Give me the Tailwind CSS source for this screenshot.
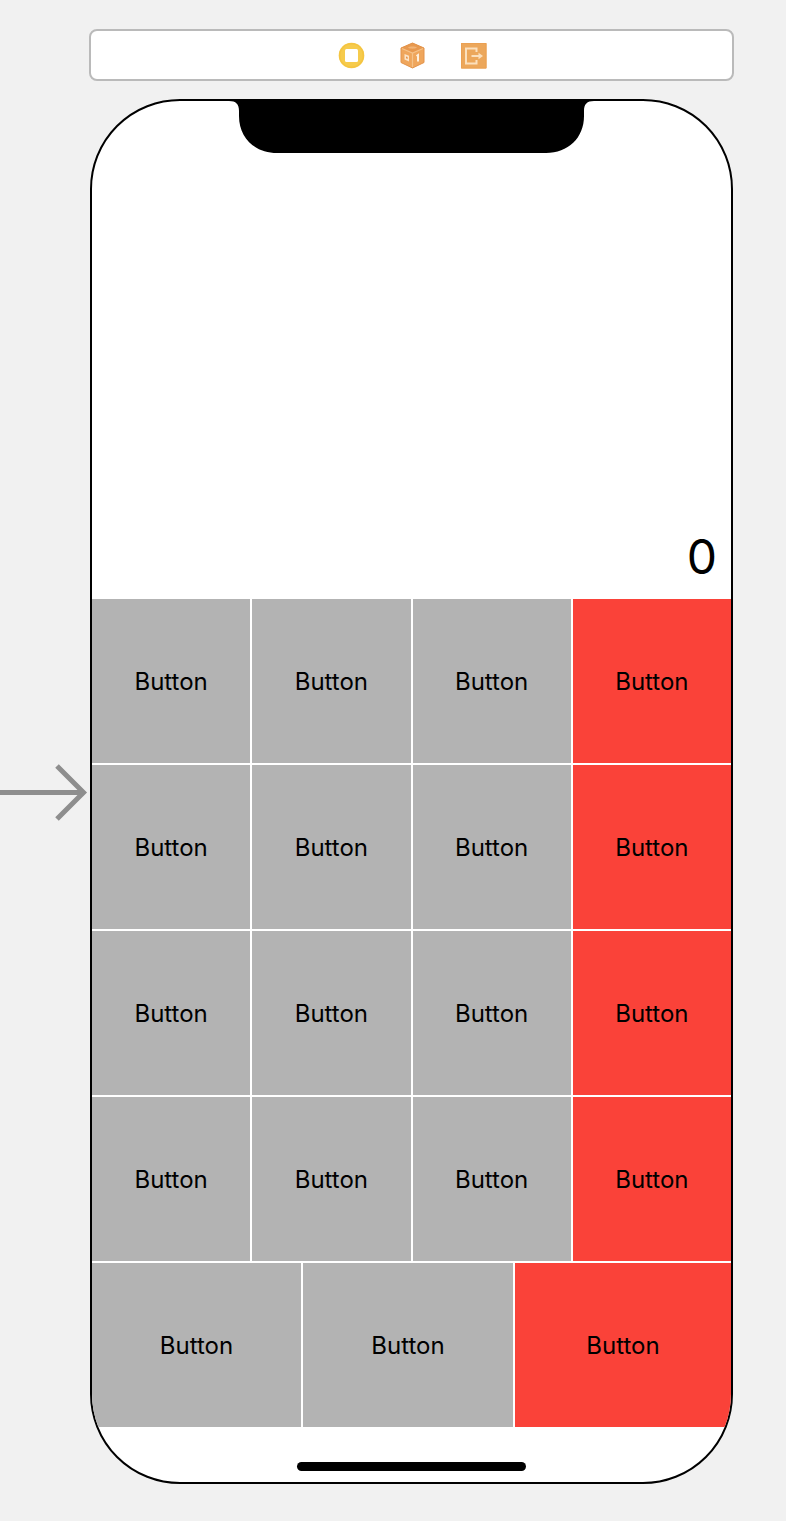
<!DOCTYPE html>
<html lang="en">
<head>
<meta charset="utf-8">
<meta name="viewport" content="width=device-width, initial-scale=1">
<title>Calculator storyboard</title>
<script src="https://cdn.jsdelivr.net/npm/@tailwindcss/browser@4"></script>
</head>
<body class="min-h-screen bg-[#f1f1f1] font-['Inter','Liberation_Sans',sans-serif] text-black">
<main class="pt-[29px] pb-9">
  <!-- Scene dock -->
  <header class="mr-[52px] ml-[89px] flex h-[52px] items-center justify-center gap-[34px] rounded-lg border-2 border-[#bababa] bg-white pl-[2px]">
    <button type="button" aria-label="View controller">
      <svg class="block size-[27px]" viewBox="0 0 27 27"><circle cx="13.500" cy="13.500" r="12.800" fill="#f6cb4c"/><circle cx="13.500" cy="13.500" r="11.800" fill="none" stroke="#f4c441" stroke-width="1.500"/><rect x="7" y="7" width="13" height="13" rx="1.500" fill="#fff"/></svg>
    </button>
    <button type="button" aria-label="First responder">
      <svg class="block size-[27px]" viewBox="0 0 27 27"><path d="M13.500 1 25 6v14.500L13.500 26 2 20.500V6z" fill="#efa65c"/><path d="M13.500 1 25 6l-11.500 5L2 6z" fill="#e8994f"/><path d="M3 6.500 13.500 11 24 6.500M13.500 11v14" fill="none" stroke="#f5c288" stroke-width="1.200"/><path d="M13.500 1 25 6v14.500L13.500 26 2 20.500V6z" fill="none" stroke="#e3934a" stroke-width="1"/><path d="M9 5.500c1.500-1.300 7-1.500 9 0-2 1.600-7 1.600-9 0z" fill="#f1b578"/><path d="m5.500 12 4.500 1.700v5.800L5.500 17.500z" fill="#fbe3c6"/><path d="m7 14.500 1.600.6v1.800L7 16.200z" fill="#e5924a"/><path d="m17.500 14 1.500-1v6.500" fill="none" stroke="#fff0dc" stroke-width="2"/></svg>
    </button>
    <button type="button" aria-label="Exit">
      <svg class="block size-[27px]" viewBox="0 0 27 27"><path d="M1 1h25.500v25.500H1z" fill="#eca75b"/><path d="M1.500 1.500h24.500v24.500h-24.500z" fill="none" stroke="#eaa053"/><path d="M16.500 10V6.500H6v15h10.500V18M11.500 14h9" fill="none" stroke="#fbe0bd" stroke-width="2"/><path d="m18.500 10.800 4.500 3.200-4.500 3.200z" fill="#fbe0bd"/></svg>
    </button>
  </header>

  <div class="mt-[18px] flex">
    <!-- Initial scene arrow -->
    <div class="flex w-[90px] shrink-0 items-center">
      <svg class="block h-[58px] w-[88px]" viewBox="0 0 88 58" fill="none" stroke="#8e8e8e" aria-label="Initial scene"><path d="M0 29.500h83" stroke-width="5"/><path d="M57 3 83.500 29.500 57 56" stroke-width="5"/></svg>
    </div>

    <section class="mr-[53px] flex min-w-0 flex-1 flex-col overflow-hidden rounded-[90px] border-2 border-black bg-white">
      <svg class="mx-auto block h-[52px] w-[365px] shrink-0" viewBox="0 0 365 52" aria-hidden="true"><path d="M0 0c7 0 10 3 10 10v5c0 22 16 37 38 37h269c22 0 38-15 38-37v-5c0-7 3-10 10-10z"/></svg>
      <output class="flex h-[446px] items-end justify-end px-[14px] pb-3 text-5xl leading-[60px]">0</output>

      <div class="flex flex-col gap-[2px]">
        <div class="grid auto-rows-[164px] grid-cols-4 gap-[2px] text-2xl">
          <button type="button" class="bg-[#b3b3b3] pt-[2px]">Button</button>
          <button type="button" class="bg-[#b3b3b3] pt-[2px]">Button</button>
          <button type="button" class="bg-[#b3b3b3] pt-[2px]">Button</button>
          <button type="button" class="bg-[#fa4239] pt-[2px]">Button</button>
          <button type="button" class="bg-[#b3b3b3] pt-[2px]">Button</button>
          <button type="button" class="bg-[#b3b3b3] pt-[2px]">Button</button>
          <button type="button" class="bg-[#b3b3b3] pt-[2px]">Button</button>
          <button type="button" class="bg-[#fa4239] pt-[2px]">Button</button>
          <button type="button" class="bg-[#b3b3b3] pt-[2px]">Button</button>
          <button type="button" class="bg-[#b3b3b3] pt-[2px]">Button</button>
          <button type="button" class="bg-[#b3b3b3] pt-[2px]">Button</button>
          <button type="button" class="bg-[#fa4239] pt-[2px]">Button</button>
          <button type="button" class="bg-[#b3b3b3] pt-[2px]">Button</button>
          <button type="button" class="bg-[#b3b3b3] pt-[2px]">Button</button>
          <button type="button" class="bg-[#b3b3b3] pt-[2px]">Button</button>
          <button type="button" class="bg-[#fa4239] pt-[2px]">Button</button>
        </div>
        <div class="grid h-[164px] grid-cols-[209fr_210fr_216fr] gap-[2px] text-2xl">
          <button type="button" class="bg-[#b3b3b3] pt-[2px]">Button</button>
          <button type="button" class="bg-[#b3b3b3] pt-[2px]">Button</button>
          <button type="button" class="bg-[#fa4239] pt-[2px]">Button</button>
        </div>
      </div>

      <div class="flex h-[55px] items-end justify-center pb-[11px]">
        <div class="h-[9px] w-[229px] rounded-full bg-black"></div>
      </div>
    </section>
  </div>
</main>
</body>
</html>
